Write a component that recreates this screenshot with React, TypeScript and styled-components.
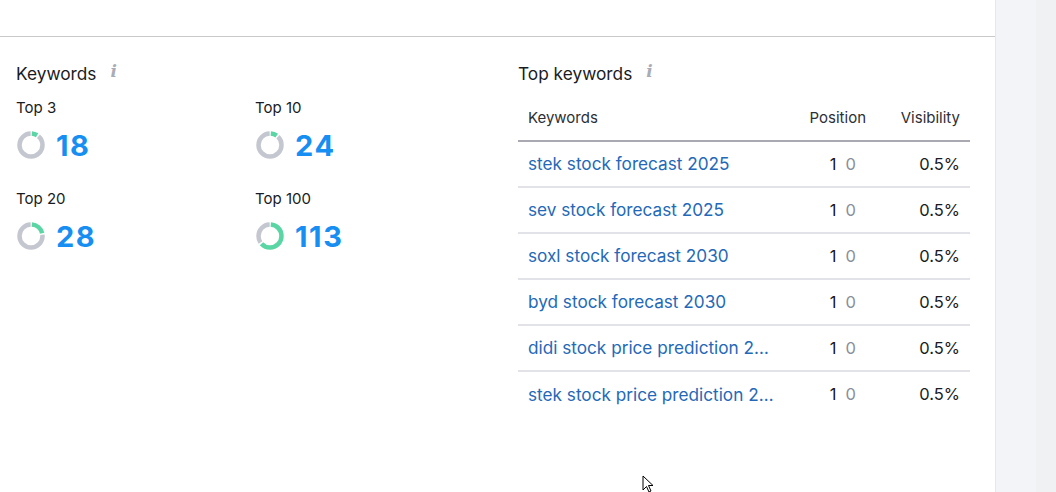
import React from "react";
import styled, { createGlobalStyle } from "styled-components";

const GlobalStyle = createGlobalStyle`
  html, body {
    margin: 0;
    padding: 0;
    background: #ffffff;
  }
  body {
    font-family: Inter, "Noto Sans", "Liberation Sans", sans-serif;
    color: #191b23;
  }
`;

const Page = styled.div`
  display: flex;
  width: 1056px;
  height: 492px;
  overflow: hidden;
  position: relative;
`;

const Main = styled.div`
  width: 995px;
  flex-shrink: 0;
  background: #ffffff;
  display: flex;
  flex-direction: column;
`;

const TopBar = styled.div`
  height: 36px;
  border-bottom: 1px solid #c9c9cd;
`;

const Content = styled.div`
  display: grid;
  grid-template-columns: 502px 452px;
  padding: 24px 16px 0;
`;

const Side = styled.div`
  flex: 1;
  display: flex;
  border-left: 1px solid #e6e7eb;
`;

const SideStrip = styled.div<{ $shade: string; $width?: number }>`
  background: ${({ $shade }) => $shade};
  ${({ $width }) => ($width ? `width: ${$width}px;` : "flex: 1;")}
`;

const TitleRow = styled.div`
  display: flex;
  align-items: center;
  gap: 14px;
  height: 24px;
  font-size: 17.3px;
  color: #191b23;
`;

const InfoMark = styled.span`
  font-family: "DejaVu Serif", "Liberation Serif", serif;
  font-style: italic;
  font-weight: bold;
  font-size: 17px;
  color: #a9abb6;
  line-height: 1;
  margin-top: -4px;
`;

const StatGrid = styled.div`
  display: grid;
  grid-template-columns: 239px 239px;
  row-gap: 26px;
  margin-top: 13px;
`;

const Stat = styled.div`
  display: flex;
  flex-direction: column;
  gap: 9px;
`;

const StatLabel = styled.div`
  font-size: 15px;
  line-height: 20px;
  color: #191b23;
`;

const StatValue = styled.div`
  display: flex;
  align-items: center;
  gap: 10px;
  height: 36px;
`;

const StatNumber = styled.span`
  font-size: 29px;
  font-weight: 700;
  color: #168ef2;
  letter-spacing: 1.6px;
`;

const Table = styled.table`
  width: 452px;
  margin-top: 10px;
  border-collapse: collapse;
  table-layout: fixed;
`;

const HeadCell = styled.th<{ $align?: string; $width?: number }>`
  box-sizing: border-box;
  height: 46px;
  padding: 0 10px;
  text-align: ${({ $align }) => $align || "left"};
  font-size: 15px;
  font-weight: 400;
  color: #2d2f36;
  border-bottom: 2px solid #a8a9b1;
  ${({ $width }) => ($width ? `width: ${$width}px;` : "")}
`;

const Row = styled.tr`
  &:not(:last-child) td {
    border-bottom: 2px solid #e2e3e8;
  }
`;

const Cell = styled.td<{ $align?: string; $pad?: number }>`
  box-sizing: border-box;
  height: 46px;
  padding: 0 ${({ $pad }) => $pad ?? 10}px 1px 10px;
  text-align: ${({ $align }) => $align || "left"};
  font-size: 16.5px;
  color: #191b23;
  white-space: nowrap;
  overflow: hidden;
  text-overflow: ellipsis;
`;

const KeywordCell = styled(Cell)`
  font-size: 17.2px;
  color: #2469b8;
`;

const KeywordLink = styled.a`
  color: inherit;
  text-decoration: none;
`;

const MutedDigit = styled.span`
  color: #8a8e9b;
  margin-left: 9px;
`;

const Cursor = styled.svg`
  position: absolute;
  left: 642px;
  top: 475px;
`;

type Ring = { label: string; value: number; share: number };

const rings: Ring[] = [
  { label: "Top 3", value: 18, share: 0.1 },
  { label: "Top 10", value: 24, share: 0.11 },
  { label: "Top 20", value: 28, share: 0.22 },
  { label: "Top 100", value: 113, share: 0.64 },
];

const keywords = [
  "stek stock forecast 2025",
  "sev stock forecast 2025",
  "soxl stock forecast 2030",
  "byd stock forecast 2030",
  "didi stock price prediction 2025",
  "stek stock price prediction 2030",
];

const Donut: React.FC<{ share: number }> = ({ share }) => {
  const r = 11.5;
  const c = 2 * Math.PI * r;
  const gap = 1.6;
  const green = Math.max(c * share - gap, 0);
  const grey = c - c * share - gap;
  return (
    <svg width="30" height="30" viewBox="0 0 30 30">
      <g transform="rotate(-90 15 15)">
        <circle
          cx="15"
          cy="15"
          r={r}
          fill="none"
          stroke="#c4c7cf"
          strokeWidth="4.5"
          strokeDasharray={`${grey} ${c}`}
          strokeDashoffset={-(c * share + gap / 2)}
        />
        <circle
          cx="15"
          cy="15"
          r={r}
          fill="none"
          stroke="#5ad6a5"
          strokeWidth="4.5"
          strokeDasharray={`${green} ${c}`}
          strokeDashoffset={-gap / 2}
        />
      </g>
    </svg>
  );
};

const App: React.FC = () => {
  return (
    <Page>
      <GlobalStyle />
      <Main>
        <TopBar />
        <Content>
          <div>
            <TitleRow>
              Keywords <InfoMark>i</InfoMark>
            </TitleRow>
            <StatGrid>
              {rings.map((r) => (
                <Stat key={r.label}>
                  <StatLabel>{r.label}</StatLabel>
                  <StatValue>
                    <Donut share={r.share} />
                    <StatNumber>{r.value}</StatNumber>
                  </StatValue>
                </Stat>
              ))}
            </StatGrid>
          </div>
          <div>
            <TitleRow>
              Top keywords <InfoMark>i</InfoMark>
            </TitleRow>
            <Table>
              <thead>
                <tr>
                  <HeadCell>Keywords</HeadCell>
                  <HeadCell $align="right" $width={100}>
                    Position
                  </HeadCell>
                  <HeadCell $align="right" $width={94}>
                    Visibility
                  </HeadCell>
                </tr>
              </thead>
              <tbody>
                {keywords.map((k) => (
                  <Row key={k}>
                    <KeywordCell $pad={2}>
                      <KeywordLink href="#">{k}</KeywordLink>
                    </KeywordCell>
                    <Cell $align="right" $pad={20}>
                      1<MutedDigit>0</MutedDigit>
                    </Cell>
                    <Cell $align="right">0.5%</Cell>
                  </Row>
                ))}
              </tbody>
            </Table>
          </div>
        </Content>
      </Main>
      <Side>
        <SideStrip $shade="#f3f4f8" $width={40} />
        <SideStrip $shade="#f0f1f3" />
      </Side>
      <Cursor width="12" height="18" viewBox="0 0 12 18">
        <path
          d="M1 1 L1 15 L4.5 11.5 L7 17 L9 16 L6.5 10.5 L11 10.5 Z"
          fill="#ffffff"
          stroke="#000000"
          strokeWidth="1"
          strokeLinejoin="round"
        />
      </Cursor>
    </Page>
  );
};

export default App;
